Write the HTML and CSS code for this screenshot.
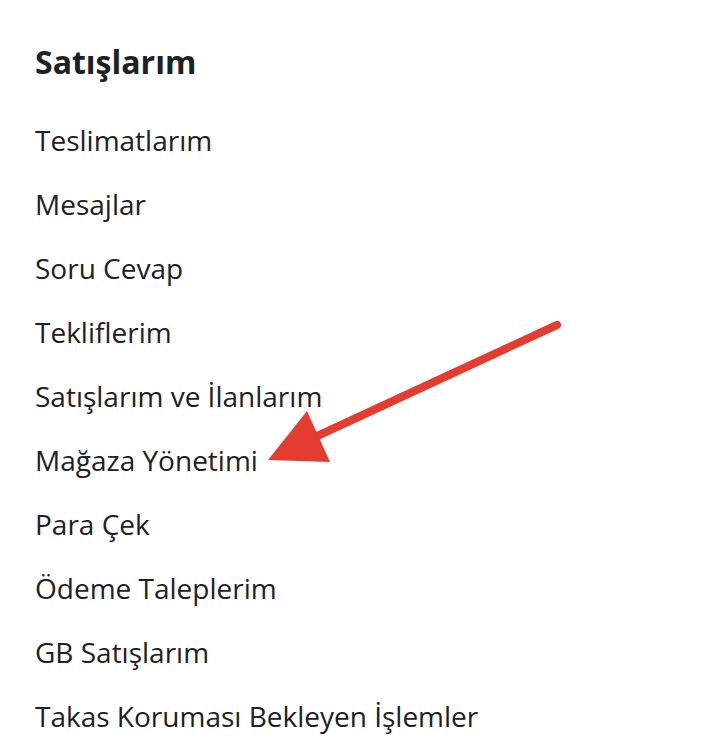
FILE: index.html
```html
<!DOCTYPE html>
<html lang="tr">
<head>
  <meta charset="UTF-8" />
  <title>Satışlarım</title>
  <link rel="stylesheet" href="styles.css">
</head>
<body>
  <div class="menu">
    <h2 class="menu-title">Satışlarım</h2>
    <ul class="menu-list">
      <li><a href="#">Teslimatlarım</a></li>
      <li><a href="#">Mesajlar</a></li>
      <li><a href="#">Soru Cevap</a></li>
      <li><a href="#">Tekliflerim</a></li>
      <li><a href="#">Satışlarım ve İlanlarım</a></li>
      <li><a href="#">Mağaza Yönetimi</a></li>
      <li><a href="#">Para Çek</a></li>
      <li><a href="#">Ödeme Taleplerim</a></li>
      <li><a href="#">GB Satışlarım</a></li>
      <li><a href="#">Takas Koruması Bekleyen İşlemler</a></li>
    </ul>

    <!-- pointer arrow -->
    <svg class="arrow" width="726" height="756" viewBox="0 0 726 756">
      <line x1="557" y1="325" x2="300" y2="444" stroke="#e53c31" stroke-width="8" stroke-linecap="round"/>
      <polygon points="268,460 307,411 330,462" fill="#e53c31"/>
    </svg>
  </div>
</body>
</html>
```

FILE: styles.css
```css
* {
  box-sizing: border-box;
  margin: 0;
  padding: 0;
}

body {
  font-family: 'Open Sans', sans-serif;
  background: #ffffff;
  color: #1d2027;
}

.menu {
  position: relative;
  height: 756px;
  overflow: hidden;
  padding: 40px 35px 0;
}

.menu-title {
  font-size: 32px;
  font-weight: 700;
  line-height: 44px;
  margin-bottom: 24px;
}

.menu-list {
  list-style: none;
}

.menu-list li {
  font-size: 28px;
  line-height: 64px;
}

.menu-list a {
  color: #1d2027;
  text-decoration: none;
}

.arrow {
  position: absolute;
  top: 0;
  left: 0;
  pointer-events: none;
}
```
